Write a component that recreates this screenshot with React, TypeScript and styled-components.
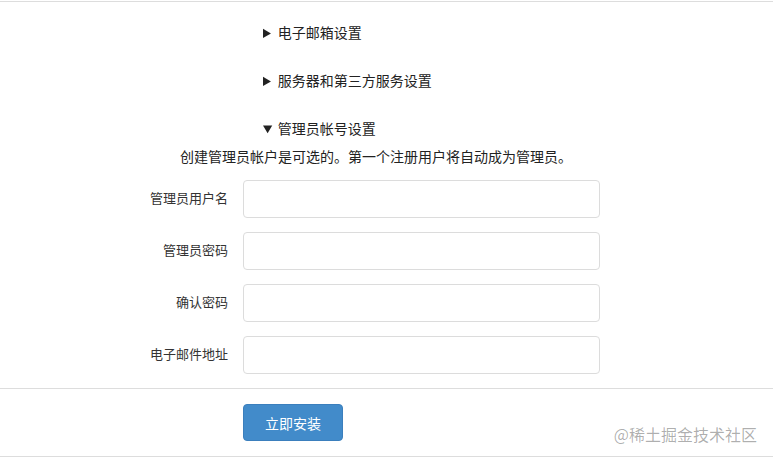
import React from "react";
import styled, { createGlobalStyle } from "styled-components";

const Global = createGlobalStyle`
  html, body { margin: 0; padding: 0; background: #fff; }
  body {
    font-family: "Noto Sans CJK SC", "Microsoft YaHei", "Liberation Sans", sans-serif;
    color: #333;
  }
  * { box-sizing: border-box; }
`;

const Page = styled.div`
  position: relative;
  width: 773px;
  height: 458px;
  overflow: hidden;
  padding-top: 1px;
`;

const Rule = styled.div<{ $mt?: number }>`
  height: 1px;
  background: #dddddd;
  margin-top: ${(p) => p.$mt ?? 0}px;
`;

const Sections = styled.div`
  display: flex;
  flex-direction: column;
  gap: 28px;
  padding-top: 20px;
`;

const Details = styled.details``;

const Summary = styled.summary`
  padding-left: 263px;
  font-size: 14px;
  line-height: 20px;
  height: 20px;
  color: #222;
  cursor: pointer;
`;

const Description = styled.p`
  margin: 8px 0 0 180px;
  font-size: 14px;
  line-height: 20px;
  color: #222;
`;

const Form = styled.div`
  display: grid;
  grid-template-columns: 228px 357px;
  column-gap: 15px;
  row-gap: 14px;
  align-items: center;
  margin-top: 14px;
`;

const Label = styled.label`
  text-align: right;
  font-size: 13px;
  line-height: 18px;
  color: #333;
  padding-bottom: 2px;
`;

const Input = styled.input`
  height: 38px;
  width: 357px;
  border: 1px solid #dcdcdc;
  border-radius: 4px;
  padding: 6px 12px;
  font-size: 14px;
  outline: none;
`;

const Footer = styled.div`
  padding: 15px 0 0 243px;
`;

const Button = styled.button`
  width: 100px;
  height: 37px;
  background: #428bca;
  border: 1px solid #3b7fbd;
  border-radius: 4px;
  color: #fff;
  font-family: inherit;
  font-size: 14px;
  line-height: 20px;
  cursor: pointer;
`;

const Watermark = styled.div`
  position: absolute;
  right: 16px;
  top: 423px;
  font-size: 16px;
  line-height: 22px;
  color: rgba(0, 0, 0, 0.33);
  text-shadow: 0 0 1px rgba(255, 255, 255, 0.8);
  pointer-events: none;
`;

const fields = ["管理员用户名", "管理员密码", "确认密码", "电子邮件地址"];

export default function App() {
  return (
    <Page>
      <Global />
      <Rule />
      <Sections>
        <Details>
          <Summary>电子邮箱设置</Summary>
        </Details>
        <Details>
          <Summary>服务器和第三方服务设置</Summary>
        </Details>
        <Details open>
          <Summary>管理员帐号设置</Summary>
          <Description>创建管理员帐户是可选的。第一个注册用户将自动成为管理员。</Description>
          <Form>
            {fields.map((f) => (
              <React.Fragment key={f}>
                <Label>{f}</Label>
                <Input type={f.includes("密码") ? "password" : "text"} />
              </React.Fragment>
            ))}
          </Form>
        </Details>
      </Sections>
      <Rule $mt={14} />
      <Footer>
        <Button>立即安装</Button>
      </Footer>
      <Rule $mt={15} />
      <Watermark>@稀土掘金技术社区</Watermark>
    </Page>
  );
}
